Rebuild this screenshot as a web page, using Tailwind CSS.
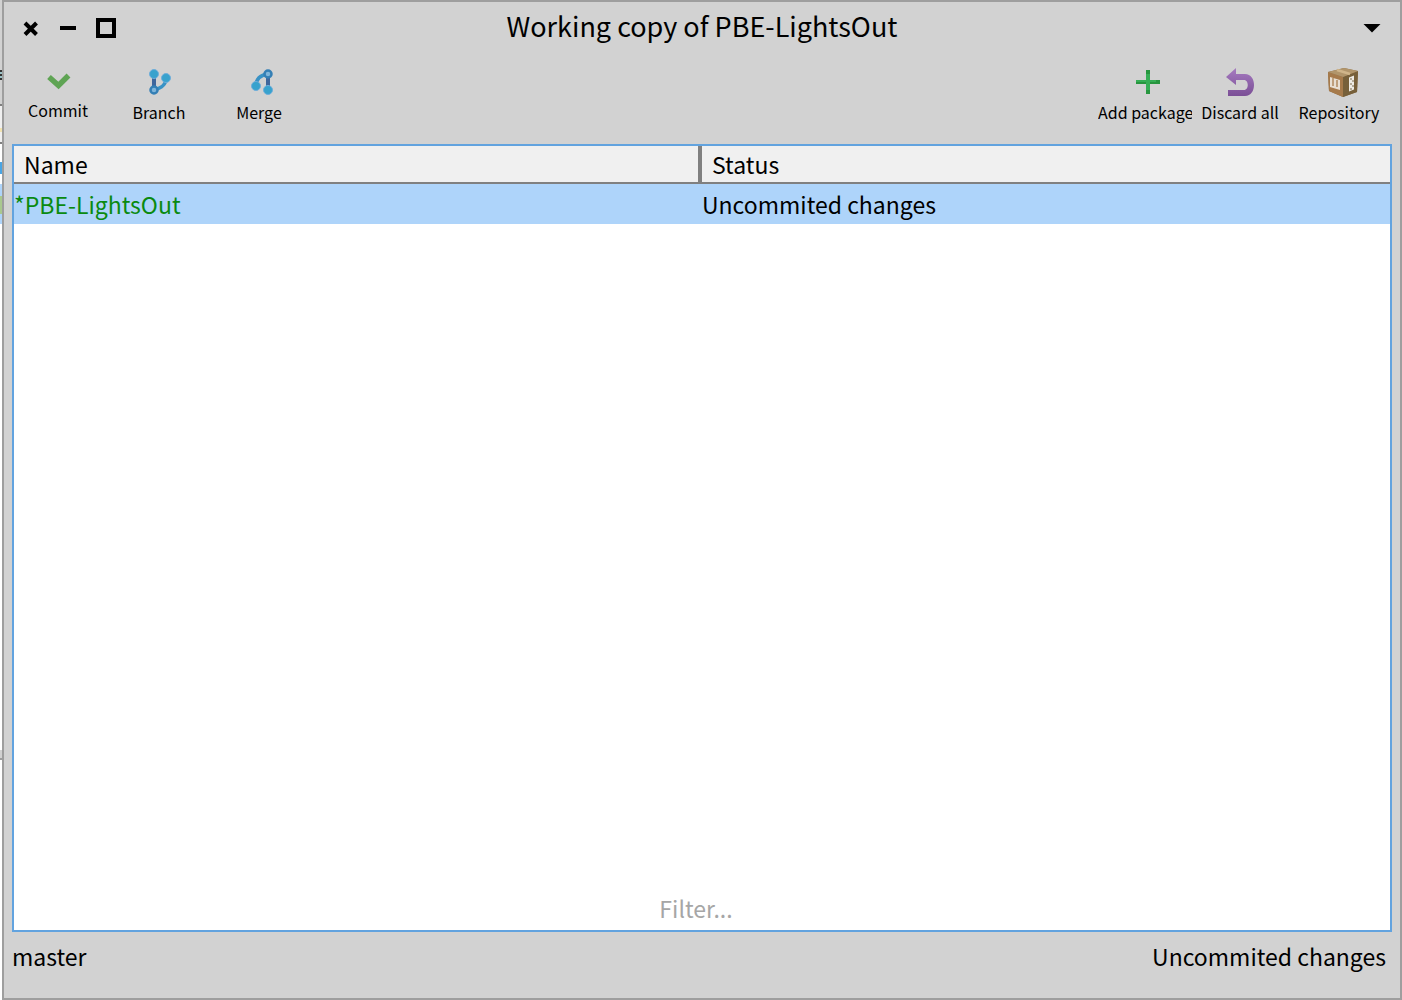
<!DOCTYPE html>
<html lang="en">
<head>
<meta charset="utf-8">
<title>Working copy of PBE-LightsOut</title>
<script src="https://cdn.jsdelivr.net/npm/@tailwindcss/browser@4"></script>
</head>
<body class="flex min-h-screen bg-white font-['Noto_Sans_CJK_SC',sans-serif] text-[23px] leading-[40px] text-black">
<!-- edge of the window behind -->
<div class="flex w-[2px] shrink-0 flex-col" aria-hidden="true">
  <div class="h-[70px] bg-[#d2d2d2]"></div>
  <div class="h-[2px] bg-[#333]"></div>
  <div class="h-[2px] bg-[#9cc4c8]"></div>
  <div class="h-[2px] bg-[#333]"></div>
  <div class="h-[2px] bg-[#9cc4c8]"></div>
  <div class="h-[2px] bg-[#333]"></div>
  <div class="h-[24px] bg-[#d2d2d2]"></div>
  <div class="h-[2px] bg-[#808080]"></div>
  <div class="h-[22px] bg-[#f0f0f0]"></div>
  <div class="h-[4px] bg-[#f2e3b0]"></div>
  <div class="h-[10px] bg-[#f0f0f0]"></div>
  <div class="h-[2px] bg-[#808080]"></div>
  <div class="h-[18px] bg-white"></div>
  <div class="h-[12px] bg-[#49a5e4]"></div>
  <div class="h-[10px] bg-white"></div>
  <div class="h-[12px] bg-[#aed4fa]"></div>
  <div class="h-[18px] bg-[#a9c88f]"></div>
  <div class="h-[10px] bg-[#aed4fa]"></div>
  <div class="h-[526px] bg-white"></div>
  <div class="h-[8px] bg-[#d2d2d2]"></div>
  <div class="h-[2px] bg-[#9e9e9e]"></div>
</div>

<main class="flex min-w-0 flex-1 flex-col border-2 border-[#9e9e9e] bg-[#d2d2d2]">
  <header class="grid h-[52px] grid-cols-[1fr_auto_1fr] items-center px-[18px]">
    <div class="flex items-center gap-[12px]">
      <button aria-label="Close" class="flex size-[18px] items-center justify-center"><svg width="18" height="18" viewBox="0 0 18 18"><path d="M3 4L14.500 15.500M14.500 4L3 15.500" stroke="#000" stroke-width="4"/></svg></button>
      <button aria-label="Minimize" class="flex h-[20px] w-[32px] items-center justify-center"><svg width="16" height="20" viewBox="0 0 16 20"><path d="M0 8h16v4H0z"/></svg></button>
      <button aria-label="Maximize" class="size-[20px] border-4 border-black"></button>
    </div>
    <h1 class="pb-1 text-[27px]">Working copy of PBE-LightsOut</h1>
    <button aria-label="Window menu" class="justify-self-end"><svg width="20" height="10" viewBox="0 0 20 10"><path d="M1.500 1h17L10 9.500z"/></svg></button>
  </header>

  <nav aria-label="Toolbar" class="flex h-[90px] items-start justify-between px-1 pt-[12px] text-[16px] leading-[24px]">
    <div class="flex">
      <button class="flex w-[100px] flex-col items-center">
        <svg width="32" height="32" viewBox="0 0 32 32"><path d="M7 11L16.500 19.500L26.500 9.500" fill="none" stroke="#5fa454" stroke-width="5.500"/></svg>
        <span>Commit</span>
      </button>
      <button class="flex w-[102px] flex-col items-center gap-[2px]">
        <svg width="32" height="32" viewBox="0 0 32 32"><path d="M11 8v16" stroke="#3f669c" stroke-width="4"/><path d="M11 24C19 22 23 19 23 12" fill="none" stroke="#3992c5" stroke-width="3.500"/><g fill="#38a2cd" stroke="#6faedb" stroke-width="1"><circle cx="11" cy="8" r="4.500"/><circle cx="23" cy="12" r="4.500"/></g><circle cx="11" cy="24" r="3.500" fill="#7fb5da" stroke="#347fb5" stroke-width="2.500"/></svg>
        <span>Branch</span>
      </button>
      <button class="flex w-[98px] flex-col items-center gap-[2px]">
        <svg width="32" height="32" viewBox="0 0 32 32"><path d="M25 8v16" stroke="#3f669c" stroke-width="4"/><path d="M25 8C17 9 13 13 13 20" fill="none" stroke="#3992c5" stroke-width="3.500"/><g fill="#38a2cd" stroke="#6faedb" stroke-width="1"><circle cx="25" cy="24" r="4.500"/><circle cx="13" cy="20" r="4.500"/></g><circle cx="25" cy="8" r="3.500" fill="#7fb5da" stroke="#347fb5" stroke-width="2.500"/></svg>
        <span>Merge</span>
      </button>
    </div>
    <div class="flex">
      <button class="flex w-[100px] flex-col items-center gap-[2px]">
        <svg width="32" height="32" viewBox="0 0 32 32"><path d="M14 4h4v10h10v4H18v10h-4V18H4v-4h10z" fill="#27963f"/><path d="M14 8h4v6h6v2h-6v8h-4v-8H4v-2h10z" fill="#36ae55"/></svg>
        <span class="mr-auto w-[94px] overflow-hidden text-left whitespace-nowrap">Add package</span>
      </button>
      <button class="flex w-[84px] flex-col items-center gap-[2px]">
        <svg width="32" height="32" viewBox="0 0 32 32"><defs><linearGradient id="undo" x1="0" y1="0" x2="0" y2="1"><stop offset="0" stop-color="#a67bc0"/><stop offset="1" stop-color="#7b4f96"/></linearGradient></defs><path d="M12 2v6h9c12 0 12 22 0 22H4v-6h16c5 0 5-10 0-10h-8v5L2 11z" fill="url(#undo)"/></svg>
        <span>Discard all</span>
      </button>
      <button class="flex w-[114px] flex-col items-center gap-[2px]">
        <svg class="ml-2" width="32" height="32" viewBox="0 0 32 32"><path d="M1 6L17 2L31 5L30 26L16 31L2 25z" fill="#8a6a42"/><path d="M1 6L16 11V31L2 25z" fill="#a67a4b"/><path d="M16 11L31 5L30 26L16 31z" fill="#77603a"/><path d="M1 6L17 2L31 5L16 11z" fill="#b1956b"/><path d="M10 4L23 8" stroke="#d0b58a" stroke-width="2.500"/><path d="M3 11L13 14V24L3 21z" fill="#e8dfd2"/><path d="M6 12v8M10 14v7" stroke="#b08a60" stroke-width="1.500"/><path d="M22 11.500l5-2v14l-5 2z" fill="#eeebe4"/><path d="M23 13h2M25 15h2M23 18h2M25 20h2M23 23h2" stroke="#a1957d" stroke-width="1.500"/></svg>
        <span>Repository</span>
      </button>
    </div>
  </nav>

  <section class="mx-2 flex flex-1 flex-col border-2 border-[#62a3df] bg-white">
    <table class="w-full table-fixed border-collapse text-left">
      <thead>
        <tr class="h-[38px] bg-[#f0f0f0] leading-[36px] shadow-[inset_0_-2px_0_#808080]">
          <th scope="col" class="w-[calc(50%+2px)] p-0 font-normal"><div class="h-[38px] border-r-4 border-[#808080] px-[10px]">Name</div></th>
          <th scope="col" class="p-0 font-normal"><div class="h-[38px] px-[10px]">Status</div></th>
        </tr>
      </thead>
      <tbody>
        <tr class="h-[40px] bg-[#aed4fa]">
          <td class="p-0 text-[#0a8a10]">*PBE-LightsOut</td>
          <td class="p-0">Uncommited changes</td>
        </tr>
      </tbody>
    </table>
    <input type="text" aria-label="Filter" placeholder="Filter..." class="mt-auto h-[40px] w-full bg-transparent pr-[12px] pb-1 text-center outline-none placeholder:text-[#a6a6a6]">
  </section>

  <footer class="flex h-[66px] justify-between px-2 pt-[4px]">
    <span>master</span>
    <span class="pr-[6px]">Uncommited changes</span>
  </footer>
</main>
</body>
</html>
